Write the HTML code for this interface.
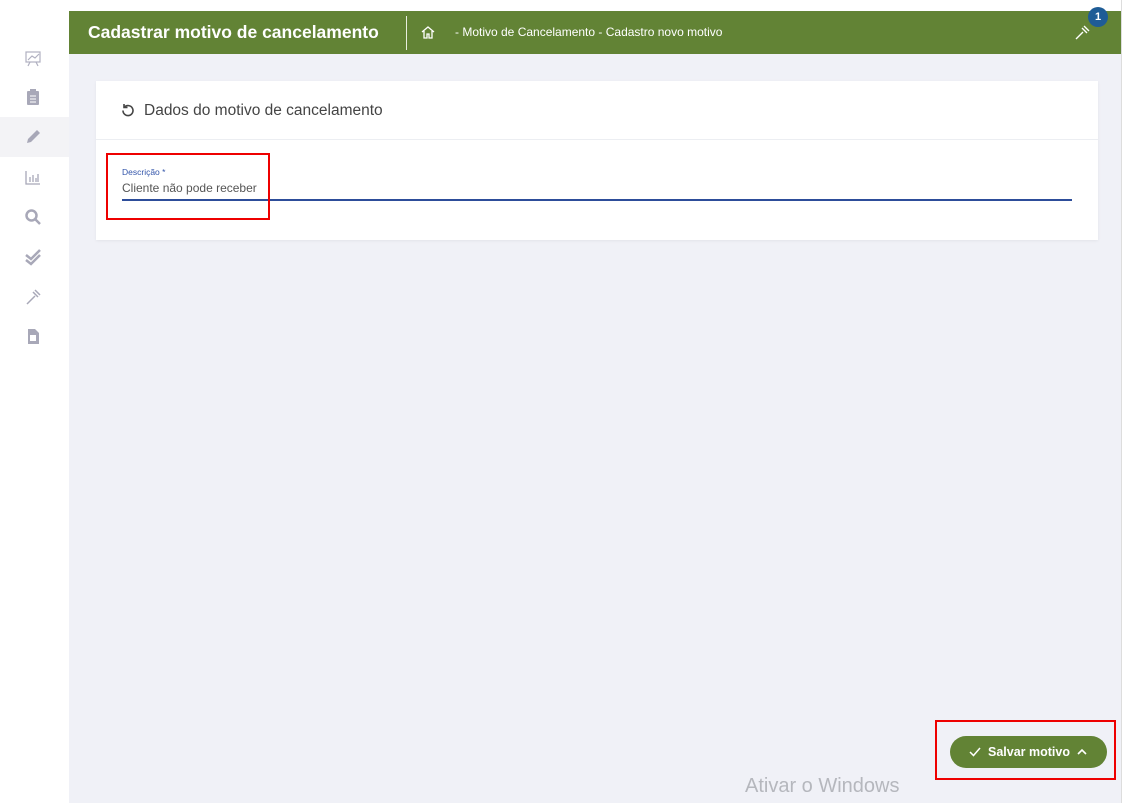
<!DOCTYPE html>
<html><head><meta charset="utf-8"><style>
*{margin:0;padding:0;box-sizing:border-box}
body{width:1126px;height:803px;position:relative;background:#fff;font-family:"Liberation Sans",sans-serif;overflow:hidden}
.side{position:absolute;left:0;top:11px;width:69px;height:792px;background:#fff}
.act{position:absolute;left:0;top:106px;width:69px;height:40px;background:#f3f3f6}
.ic{position:absolute;left:24px;width:18px;height:18px}
.main{position:absolute;left:69px;top:11px;width:1052px;height:792px;background:#f0f1f7}
.rb{position:absolute;left:1121px;top:0;width:5px;height:803px;background:#fff;border-left:1px solid #ddd}
.hdr{position:absolute;left:69px;top:11px;width:1052px;height:43px;background:#628335;color:#fff}
.title{position:absolute;left:19px;top:11px;font-size:17.5px;font-weight:bold}
.sep{position:absolute;left:337px;top:5px;width:1px;height:34px;background:#e8eedf}
.bc{position:absolute;left:386px;top:14px;font-size:12px}
.badge{position:absolute;left:1019px;top:-4px;width:20px;height:20px;border-radius:50%;background:#1e5c96;color:#fff;font-size:11px;font-weight:bold;text-align:center;line-height:20px}
.card{position:absolute;left:96px;top:81px;width:1002px;height:159px;background:#fff;box-shadow:0 1px 3px rgba(0,0,0,.06)}
.ch{height:59px;border-bottom:1px solid #eceef2;font-size:15.5px;color:#444;padding:21px 0 0 48px;position:relative}
.lbl{position:absolute;left:26px;top:86px;font-size:8.5px;color:#3355aa}
.val{position:absolute;left:26px;top:100px;font-size:12px;color:#555}
.line{position:absolute;left:26px;top:118px;width:950px;height:2px;background:#2d4d9a}
.red{position:absolute;border:2px solid #e00}
.btn{position:absolute;left:950px;top:736px;width:157px;height:32px;border-radius:16px;background:#628335;color:#fff;font-size:12.5px;font-weight:bold;line-height:32px;padding-left:38px}
.win{position:absolute;left:745px;top:775px;font-size:20px;color:#b5b7bd}
</style></head><body>
<div class="side">
<div class="act"></div>
<svg class="ic" style="top:38px" viewBox="0 0 18 18" fill="none" stroke="#b0b0c0" stroke-width="1.2"><rect x="2" y="3" width="14" height="10"/><path d="M4 11l4-4 3 2 4-4M6 13l-2 4M12 13l2 4"/></svg>
<svg class="ic" style="top:77px" viewBox="0 0 18 18"><rect x="3" y="3" width="12" height="14" rx="1" fill="#a8a8b8"/><rect x="6" y="1" width="6" height="4" fill="#a8a8b8"/><path d="M6 8h6M6 11h6M6 14h6" stroke="#fff"/></svg>
<svg class="ic" style="top:117px" viewBox="0 0 18 18"><path d="M3 15l1-4 9-9 3 3-9 9z" fill="#a8a8b8"/></svg>
<svg class="ic" style="top:157px" viewBox="0 0 18 18" fill="none" stroke="#a8a8b8" stroke-width="1.3"><path d="M2 3v13h14M6 14V9M9 14V7M12 14V10M14 14V6"/></svg>
<svg class="ic" style="top:197px" viewBox="0 0 18 18" fill="none" stroke="#a8a8b8" stroke-width="2.5"><circle cx="7.5" cy="7.5" r="5"/><path d="M11 11l5 5"/></svg>
<svg class="ic" style="top:237px" viewBox="0 0 18 18" fill="none" stroke="#a8a8b8" stroke-width="2.5"><path d="M2 7l5 4 9-9M2 12l5 4 9-9"/></svg>
<svg class="ic" style="top:277px" viewBox="0 0 18 18" fill="none" stroke="#a8a8b8" stroke-width="1.5"><path d="M3 16l8-8M9 4l5 5M11 2l5 5"/></svg>
<svg class="ic" style="top:316px" viewBox="0 0 18 18"><path d="M4 2h7l4 4v11H4z" fill="#a8a8b8"/><rect x="6" y="8" width="6" height="6" fill="#fff"/></svg>
</div>
<div class="main"></div>
<div class="rb"></div>
<div class="hdr">
<div class="title">Cadastrar motivo de cancelamento</div>
<div class="sep"></div>
<svg style="position:absolute;left:352px;top:14px" width="14" height="14" viewBox="0 0 14 14" fill="none" stroke="#fff" stroke-width="1.3"><path d="M1 7l6-5 6 5M3 6v7h3V9h2v4h3V6"/></svg>
<div class="bc">- Motivo de Cancelamento - Cadastro novo motivo</div>
<svg style="position:absolute;left:1005px;top:14px" width="16" height="16" viewBox="0 0 16 16" fill="none" stroke="#fff" stroke-width="1.4"><path d="M2 14l7-7M8 3l5 5M10 1l5 5"/></svg>
<div class="badge">1</div>
</div>
<div class="card">
<div class="ch"><svg style="position:absolute;left:24px;top:22px" width="15" height="15" viewBox="0 0 15 15" fill="none" stroke="#444" stroke-width="1.6"><path d="M3 7.5a5 5 0 1 0 1.5-3.5M4 1v3.5h3.5"/></svg>Dados do motivo de cancelamento</div>
<div class="lbl">Descrição *</div>
<div class="val">Cliente não pode receber</div>
<div class="line"></div>
</div>
<div class="red" style="left:106px;top:153px;width:164px;height:67px"></div>
<div class="red" style="left:935px;top:720px;width:181px;height:60px"></div>
<div class="btn"><svg style="position:absolute;left:19px;top:11px" width="12" height="10" viewBox="0 0 12 10" fill="none" stroke="#fff" stroke-width="1.5"><path d="M1 5l3.5 3.5L11 1"/></svg>Salvar motivo<svg style="position:absolute;left:127px;top:12px" width="10" height="7" viewBox="0 0 10 7" fill="none" stroke="#fff" stroke-width="1.6"><path d="M1 6l4-4 4 4"/></svg></div>
<div class="win">Ativar o Windows</div>
</body></html>
